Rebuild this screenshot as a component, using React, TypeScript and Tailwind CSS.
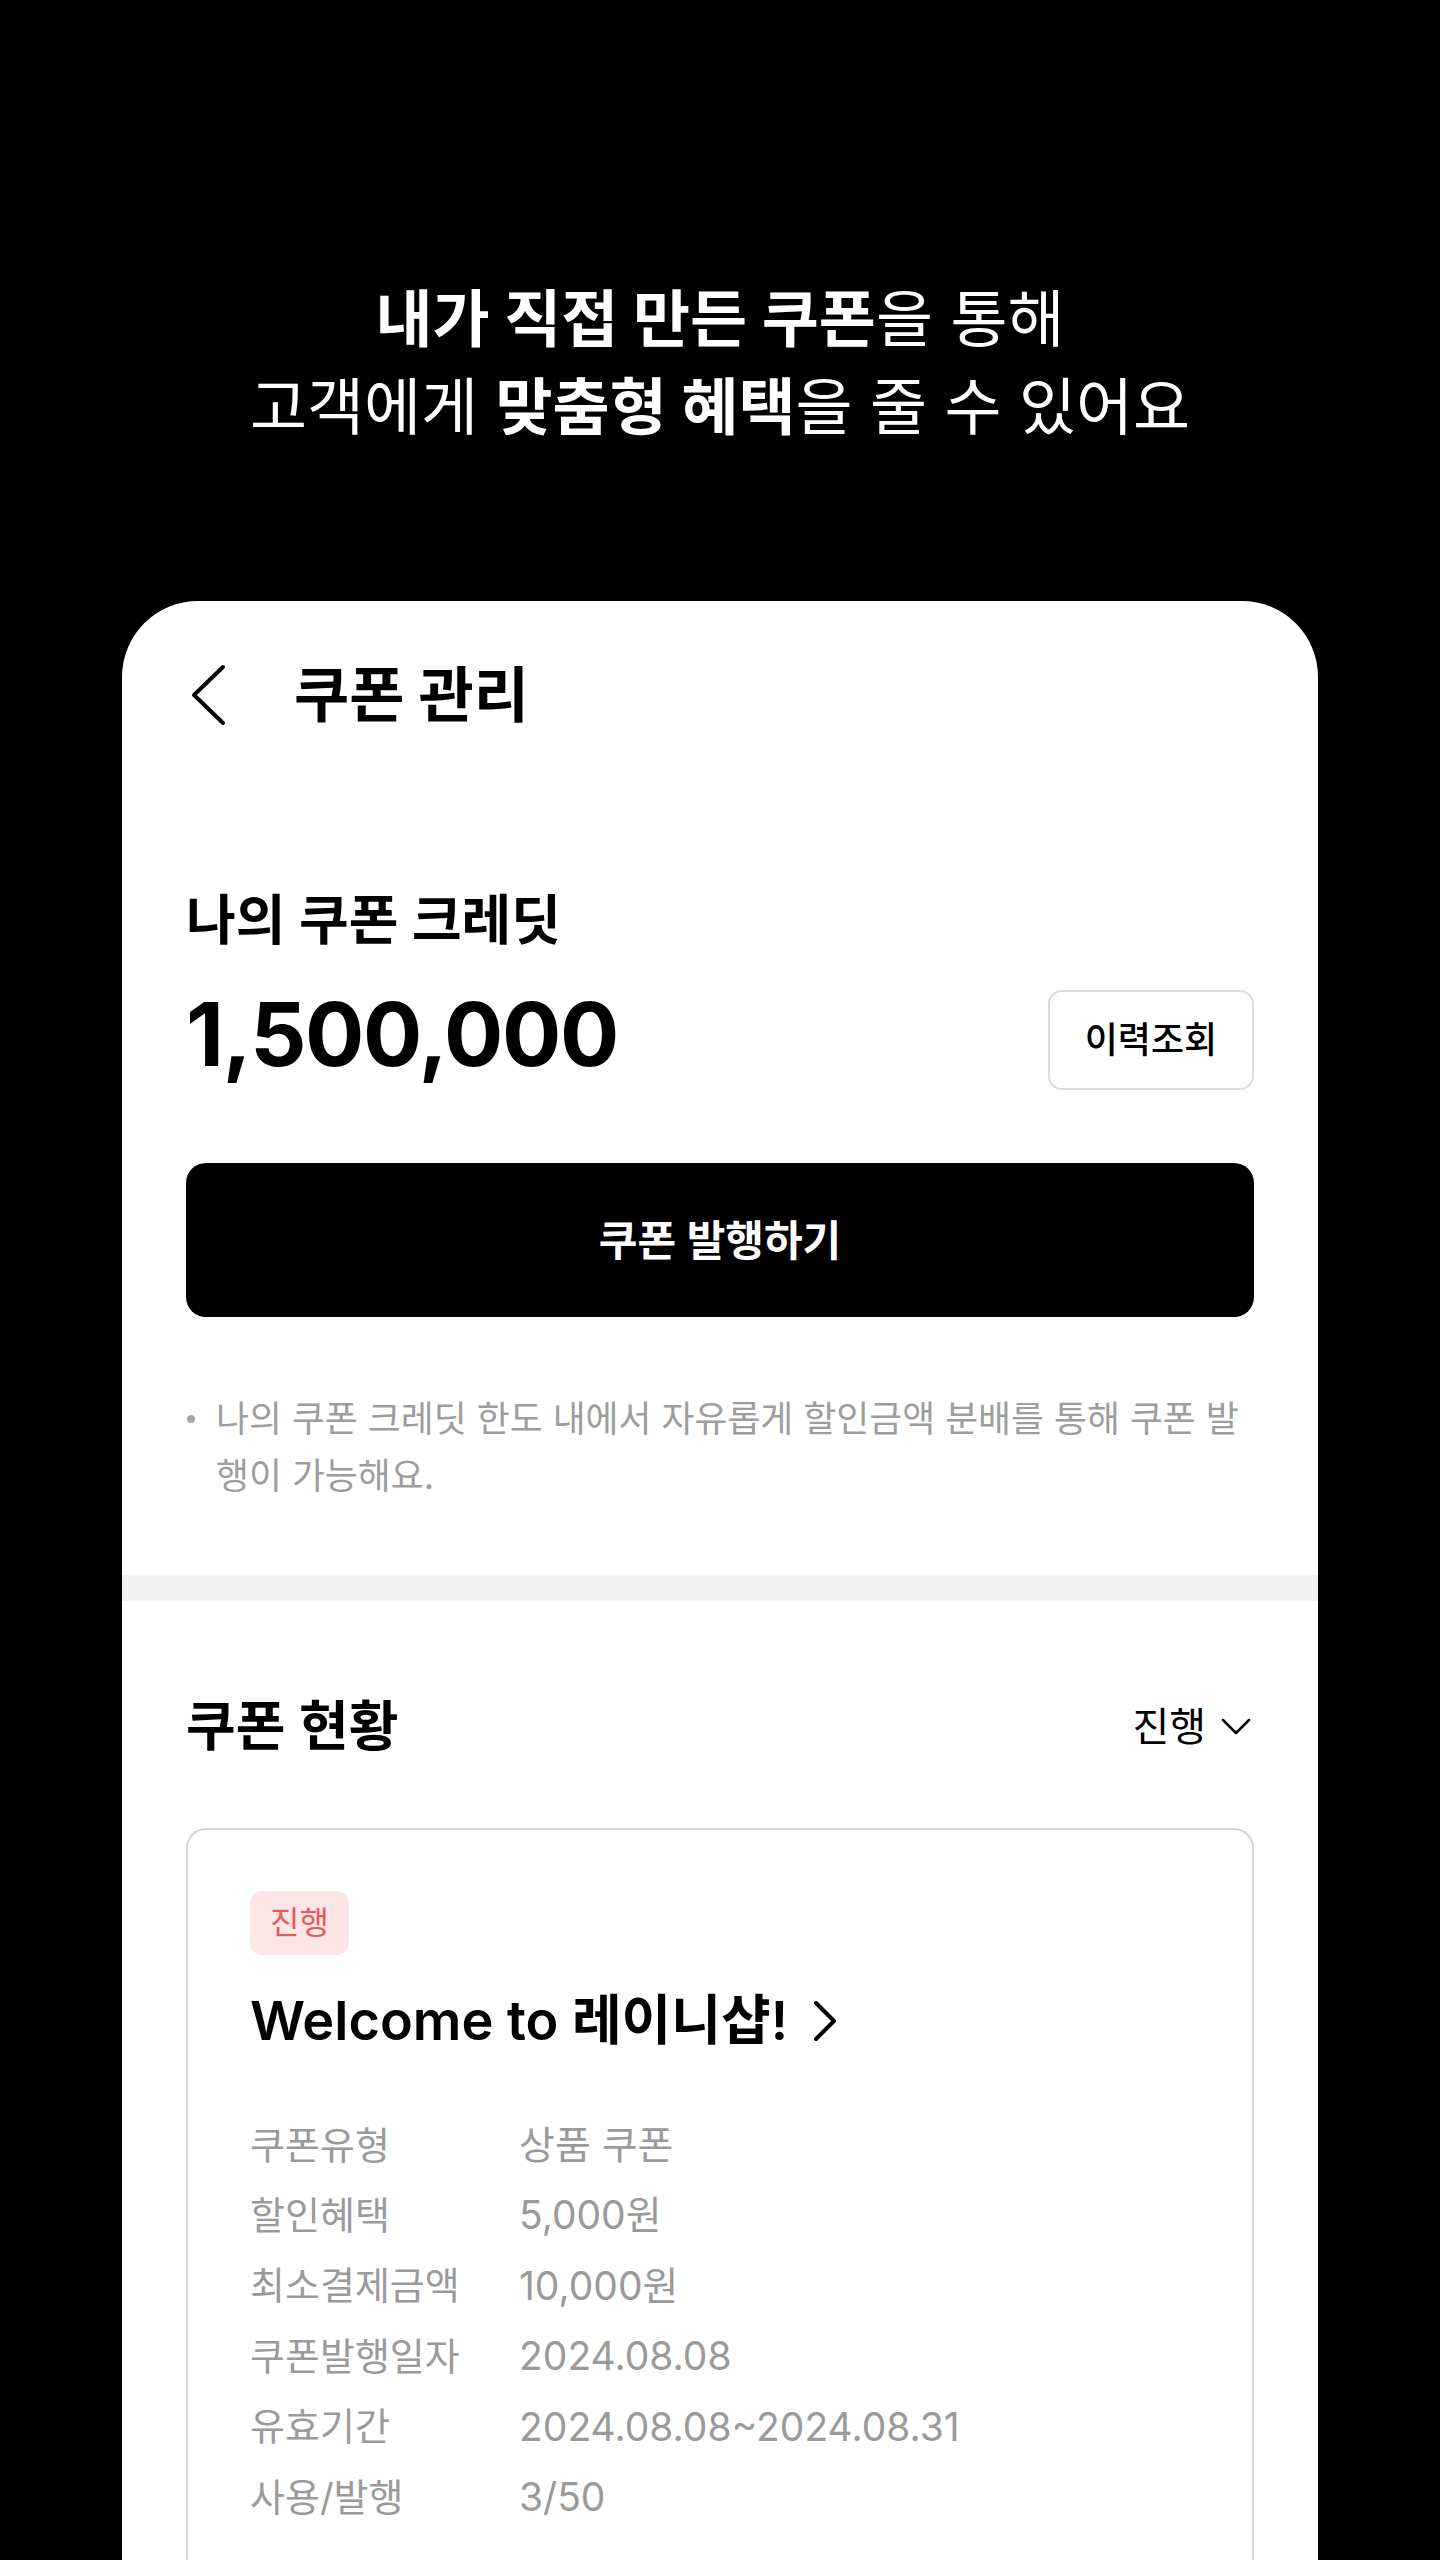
import React from "react";

const rows = [
  { label: "쿠폰유형", value: "상품 쿠폰" },
  { label: "할인혜택", value: "5,000원" },
  { label: "최소결제금액", value: "10,000원" },
  { label: "쿠폰발행일자", value: "2024.08.08" },
  { label: "유효기간", value: "2024.08.08~2024.08.31" },
  { label: "사용/발행", value: "3/50" },
];

export default function App() {
  return (
    <div className="flex h-[2560px] w-[1440px] flex-col overflow-hidden bg-black font-['Inter','Noto_Sans_CJK_KR',sans-serif]">
      {/* Headline */}
      <div className="pt-[276px] text-center text-[62px] leading-[88px] text-white">
        <p>
          <span className="font-bold">내가 직접 만든 쿠폰</span>
          <span className="font-normal">을 통해</span>
        </p>
        <p>
          <span className="font-normal">고객에게 </span>
          <span className="font-bold">맞춤형 혜택</span>
          <span className="font-normal">을 줄 수 있어요</span>
        </p>
      </div>

      {/* Phone frame */}
      <div className="mx-[122px] mt-[149px] flex-1 rounded-t-[76px] bg-white">
        {/* Header */}
        <header className="flex h-[188px] items-center px-16">
          <svg width="40" height="64" viewBox="0 0 40 64" fill="none">
            <path
              d="M37 4 L8 32 L37 60"
              stroke="#000"
              strokeWidth="4"
              strokeLinecap="round"
              strokeLinejoin="round"
            />
          </svg>
          <h1 className="ml-[68px] text-[60px] font-bold text-black">쿠폰 관리</h1>
        </header>

        {/* Credit */}
        <section className="px-16 pt-[102px] pb-[70px]">
          <p className="text-[54px] leading-[60px] font-semibold text-black">나의 쿠폰 크레딧</p>
          <div className="mt-[39px] flex items-center justify-between">
            <span className="-mt-3 text-[88px] leading-none font-bold tracking-[-0.015em] text-black">
              1,500,000
            </span>
            <button className="flex h-[100px] w-[206px] items-center justify-center rounded-[14px] border-2 border-[#dcdcdc] text-[36px] font-medium text-black">
              이력조회
            </button>
          </div>
          <button className="mt-[73px] flex h-[154px] w-full items-center justify-center rounded-[20px] bg-black text-[42px] font-semibold text-white">
            쿠폰 발행하기
          </button>
          <div className="mt-[74px] flex text-[35.8px] leading-[57px] text-[#9d9d9d]">
            <span className="mt-[24px] mr-[21px] ml-[1px] h-[8px] w-[8px] shrink-0 rounded-full bg-[#a8a8a8]" />
            <p>
              <span className="block whitespace-nowrap">
                나의 쿠폰 크레딧 한도 내에서 자유롭게 할인금액 분배를 통해 쿠폰 발
              </span>
              <span className="block">행이 가능해요.</span>
            </p>
          </div>
        </section>

        <div className="h-[26px] bg-[#f2f2f2]" />

        {/* Coupon status */}
        <section className="px-16 pt-[96px]">
          <div className="flex items-center justify-between">
            <h2 className="text-[54px] leading-[60px] font-semibold text-black">쿠폰 현황</h2>
            <div className="flex items-center gap-[15px] text-[40px] text-black">
              <span>진행</span>
              <svg width="30" height="18" viewBox="0 0 30 18" fill="none" className="mr-[3px]">
                <path
                  d="M2 2 L15 15 L28 2"
                  stroke="#000"
                  strokeWidth="2.5"
                  strokeLinecap="round"
                  strokeLinejoin="round"
                />
              </svg>
            </div>
          </div>

          <div className="mt-[71px] rounded-[20px] border-2 border-[#d6d6d6] px-[62px] pt-[61px] pb-[80px]">
            <span className="inline-flex h-[64px] w-[99px] items-center justify-center rounded-[12px] bg-[#fde5e5] text-[32px] text-[#e05c5c]">
              진행
            </span>
            <div className="mt-[34px] flex items-center gap-[23px]">
              <h3 className="text-[54px] leading-[64px] font-semibold text-black">
                Welcome to 레이니샵!
              </h3>
              <svg width="28" height="44" viewBox="0 0 28 44" fill="none">
                <path
                  d="M5 4 L23 22 L5 40"
                  stroke="#000"
                  strokeWidth="4"
                  strokeLinecap="round"
                  strokeLinejoin="round"
                />
              </svg>
            </div>
            <div className="mt-[57px]">
              {rows.map((r) => (
                <div key={r.label} className="flex items-center h-[70.4px] text-[#9a9a9a]">
                  <span className="w-[269px] shrink-0 text-[38px]">{r.label}</span>
                  <span className="text-[39px]">{r.value}</span>
                </div>
              ))}
            </div>
          </div>
        </section>
      </div>
    </div>
  );
}
